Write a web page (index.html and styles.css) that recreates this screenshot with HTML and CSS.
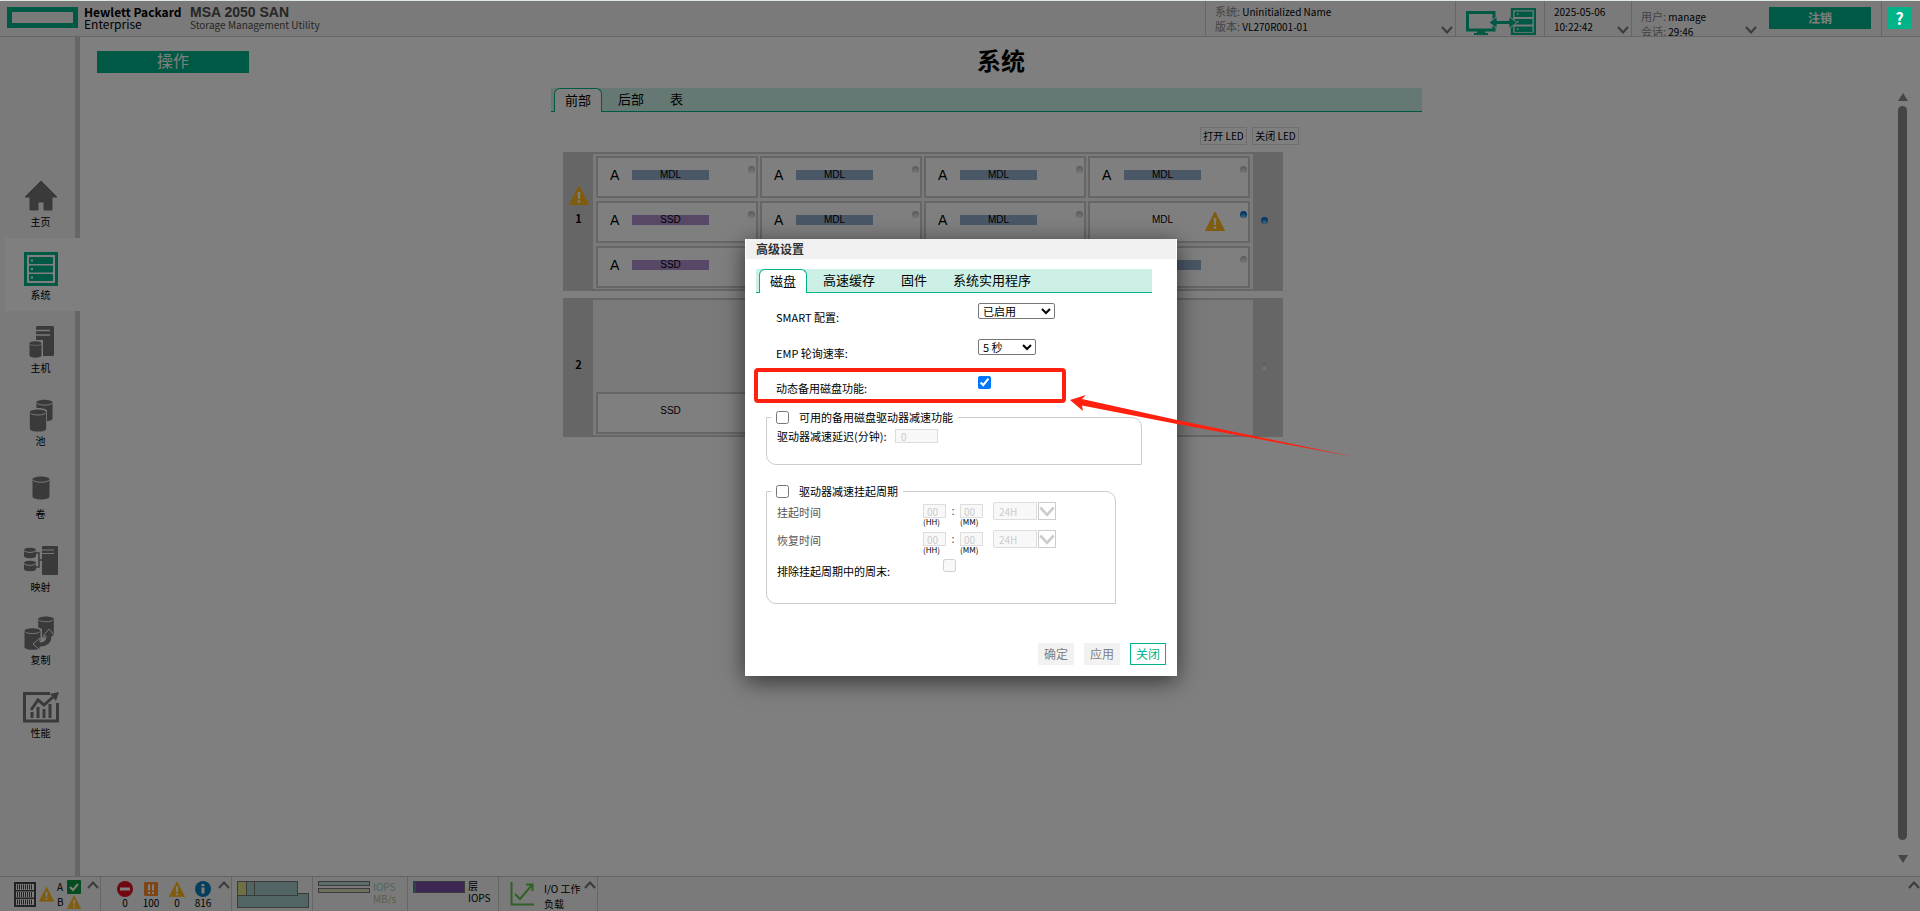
FILE: index.html
```html
<!DOCTYPE html>
<html lang="zh-CN">
<head>
    <meta charset="UTF-8">
    <title>MSA 2050 SAN</title>
    <link rel="stylesheet" href="styles.css">
</head>
<body>
    <svg class="symbols" aria-hidden="true">
        <symbol id="warn" viewBox="0 0 20 20">
            <path d="M10 1 L19.5 19.5 H0.5 Z" fill="#ffb81c" stroke="#ffb81c" stroke-linejoin="round"/>
            <path d="M8.6 7 h2.8 l-.5 7 h-1.8 z M8.8 15.4 h2.4 v2.3 h-2.4 z" fill="#fff"/>
        </symbol>
        <symbol id="down" viewBox="0 0 12 8"><path d="M1 1 L6 6.5 L11 1" fill="none" stroke="currentColor" stroke-width="2"/></symbol>
        <symbol id="up" viewBox="0 0 12 8"><path d="M1 7 L6 1.5 L11 7" fill="none" stroke="currentColor" stroke-width="2"/></symbol>
        <symbol id="cyl" viewBox="0 0 18 24">
            <path d="M0.5 3.5 C0.5 -.5 17.5 -.5 17.5 3.5 V20.5 C17.5 24.5 .5 24.5 .5 20.5 Z" fill="#757575"/>
            <path d="M1 4 C2 7 16 7 17 4" fill="none" stroke="#f4f4f4"/>
        </symbol>
    </svg>

    <div class="app">
        <header class="header">
            <div class="brand">
                <span class="brand-mark"></span>
                <div class="brand-name"><b>Hewlett Packard</b><span>Enterprise</span></div>
                <div class="product"><b>MSA 2050 SAN</b><span>Storage Management Utility</span></div>
            </div>
            <div class="info info-system">
                <div><span>系统:</span> Uninitialized Name</div>
                <div><span>版本:</span> VL270R001-01</div>
                <svg class="chevron"><use href="#down"/></svg>
            </div>
            <div class="info info-link">
                <svg width="70" height="27" viewBox="0 0 70 27">
                    <path d="M1.5 4.5 H28 V22 H1.5 Z" fill="none" stroke="#00b388" stroke-width="3"/>
                    <path d="M11 23 h8 v2 h3 v2 h-14 v-2 h3z" fill="#00b388"/>
                    <path d="M46 1 H69 V26 H46 Z" fill="none" stroke="#00b388" stroke-width="2.4"/>
                    <path d="M48.500 3.500 h18 v5.500 h-18z M48.500 11 h18 v5.500 h-18z M48.500 18.500 h18 v5.500 h-18z" fill="#00b388"/>
                    <path d="M51 6 h1.500 M51 13.700 h1.500 M51 21 h1.500" stroke="#f4f4f4" stroke-width="1.500"/>
                    <path d="M23 14.500 L31 8.500 V12.500 H43 V8.500 L51 14.500 L43 20.500 V16.500 H31 V20.500 Z" fill="#00b388" stroke="#f4f4f4"/>
                </svg>
            </div>
            <div class="info info-date">
                <div>2025-05-06</div>
                <div>10:22:42</div>
                <svg class="chevron"><use href="#down"/></svg>
            </div>
            <div class="info info-user">
                <div><span>用户:</span> manage</div>
                <div><span>会话:</span> 29:46</div>
                <svg class="chevron"><use href="#down"/></svg>
            </div>
            <div class="logout"><button type="button">注销</button></div>
            <div class="help"><button type="button">?</button></div>
        </header>

        <div class="body">
            <nav class="sidebar">
                <a href="#">
                    <svg width="34" height="34" viewBox="0 0 34 34"><path d="M17 2 L33 18 H28 V31 H20 V23 H14 V31 H6 V18 H1 Z" fill="#757575" stroke="#757575" stroke-linejoin="round"/></svg>
                    主页
                </a>
                <a href="#" class="active">
                    <svg width="34" height="34" viewBox="0 0 34 34">
                        <path d="M1.500 1.500 H32.500 V32.500 H1.500 Z" fill="none" stroke="#00b388" stroke-width="3"/>
                        <g fill="#00b388"><rect x="5" y="5" width="24" height="7" rx="1"/><rect x="5" y="13.500" width="24" height="7" rx="1"/><rect x="5" y="22" width="24" height="7" rx="1"/></g>
                        <path d="M7 8.500 h2 M7 17 h2 M7 25.500 h2" stroke="#fff" stroke-width="2"/>
                    </svg>
                    系统
                </a>
                <a href="#">
                    <svg width="34" height="34" viewBox="0 0 34 34">
                        <rect x="12" y="1" width="18" height="30" rx="1.500" fill="#757575"/>
                        <path d="M12 5.500 h14 M12 10 h14" stroke="#f4f4f4" stroke-width="1.500"/>
                        <path d="M4 15 h15 v18 h-15z" fill="#f4f4f4"/>
                        <use href="#cyl" x="5" y="16" width="13" height="17"/>
                    </svg>
                    主机
                </a>
                <a href="#">
                    <svg width="34" height="34" viewBox="0 0 34 34">
                        <use href="#cyl" x="12" y="1" width="17" height="23"/>
                        <path d="M5 13 C5 9 23 9 23 13 V33 H5z" fill="#f4f4f4"/>
                        <use href="#cyl" x="5" y="11" width="18" height="23"/>
                    </svg>
                    池
                </a>
                <a href="#">
                    <svg width="34" height="34" viewBox="0 0 34 34"><use href="#cyl" x="8" y="5" width="18" height="24"/></svg>
                    卷
                </a>
                <a href="#">
                    <svg width="34" height="34" viewBox="0 0 34 34">
                        <rect x="18" y="2" width="16" height="29" rx="1" fill="#757575"/>
                        <path d="M18 6 h12 M18 9.500 h12" stroke="#f4f4f4"/>
                        <path d="M12 9 h3 v14 h-3 M15 16 h3" fill="none" stroke="#757575" stroke-width="1.500"/>
                        <g fill="#757575"><path d="M0 6 C0 3 12 3 12 6 V12 C12 15 0 15 0 12Z"/><path d="M0 19 C0 16 12 16 12 19 V25 C12 28 0 28 0 25Z"/></g>
                        <path d="M0 6.500 C2 9 10 9 12 6.500 M0 19.500 C2 22 10 22 12 19.500" fill="none" stroke="#f4f4f4"/>
                    </svg>
                    映射
                </a>
                <a href="#">
                    <svg width="34" height="36" viewBox="0 0 34 36">
                        <use href="#cyl" x="13" y="1" width="18" height="22"/>
                        <path d="M0 15 C0 11 18 11 18 15 V36 H0z" fill="#f4f4f4"/>
                        <use href="#cyl" x="0" y="12" width="17" height="24"/>
                        <path d="M9 29 L16 23 V27 C20 27 22 25 22 21 H19 L25 14 L31 21 H28 C28 28 23 32 16 32 V35 Z" fill="#757575" stroke="#f4f4f4"/>
                    </svg>
                    复制
                </a>
                <a href="#">
                    <svg width="36" height="34" viewBox="0 0 36 34">
                        <path d="M27 3.500 H1.500 V31 H34.500 V13" fill="none" stroke="#757575" stroke-width="3"/>
                        <path d="M8 20 L15 10 L21 15 L30 7" fill="none" stroke="#757575" stroke-width="3"/>
                        <path d="M27 4 L36 2 L33 11z" fill="#757575"/>
                        <path d="M9 22 v6 M15 17 v11 M21 19 v9 M27 14 v14" stroke="#757575" stroke-width="3"/>
                    </svg>
                    性能
                </a>
            </nav>

            <main class="main">
                <button type="button" class="action">操作</button>
                <h1>系统</h1>
                <div class="content">
                    <div class="tabs">
                        <button type="button" class="tab active">前部</button>
                        <button type="button" class="tab">后部</button>
                        <button type="button" class="tab">表</button>
                    </div>
                    <div class="led-buttons">
                        <button type="button">打开 LED</button>
                        <button type="button">关闭 LED</button>
                    </div>
                    <section class="enclosure">
                        <div class="rail">
                            <div class="rail-state"><svg width="20" height="20"><use href="#warn"/></svg></div>
                            <b>1</b>
                        </div>
                        <div class="disks">
                            <div class="disk"><span class="group">A</span><span class="type mdl">MDL</span><i class="led"></i></div>
                            <div class="disk"><span class="group">A</span><span class="type mdl">MDL</span><i class="led"></i></div>
                            <div class="disk"><span class="group">A</span><span class="type mdl">MDL</span><i class="led"></i></div>
                            <div class="disk"><span class="group">A</span><span class="type mdl">MDL</span><i class="led"></i></div>
                            <div class="disk"><span class="group">A</span><span class="type ssd">SSD</span><i class="led"></i></div>
                            <div class="disk"><span class="group">A</span><span class="type mdl">MDL</span><i class="led"></i></div>
                            <div class="disk"><span class="group">A</span><span class="type mdl">MDL</span><i class="led"></i></div>
                            <div class="disk"><span class="group"></span><span class="type">MDL</span><svg class="disk-warn" width="20" height="20"><use href="#warn"/></svg><i class="led on"></i></div>
                            <div class="disk"><span class="group">A</span><span class="type ssd">SSD</span><i class="led"></i></div>
                            <div class="disk"><span class="group">A</span><span class="type mdl">MDL</span><i class="led"></i></div>
                            <div class="disk"><span class="group">A</span><span class="type mdl">MDL</span><i class="led"></i></div>
                            <div class="disk"><span class="group">A</span><span class="type mdl">MDL</span><i class="led"></i></div>
                        </div>
                        <div class="rail rail-right"><i class="led on"></i></div>
                    </section>
                    <section class="enclosure">
                        <div class="rail">
                            <div class="rail-state"></div>
                            <b>2</b>
                        </div>
                        <div class="disks disks-bottom">
                            <div class="disk"><span class="group"></span><span class="type">SSD</span></div>
                        </div>
                        <div class="rail rail-right"><i class="led"></i></div>
                    </section>
                </div>
                <div class="scrollbar">
                    <svg width="10" height="8"><path d="M5 0 L10 8 H0z" fill="#8a8a8a"/></svg>
                    <span></span>
                    <svg width="10" height="8"><path d="M5 8 L10 0 H0z" fill="#8a8a8a"/></svg>
                </div>
            </main>
        </div>

        <footer class="footer">
            <div class="cell cell-health">
                <svg width="22" height="25" viewBox="0 0 22 25">
                    <rect x="1" y="1" width="20" height="23" fill="#fff" stroke="#444" stroke-width="2"/>
                    <path d="M3 5 h16 M3 12.500 h16 M3 20 h16" stroke="#5c3044" stroke-width="5" stroke-dasharray="1 1"/>
                    <path d="M2 8.700 h18 M2 16.200 h18" stroke="#444" stroke-width="1.500"/>
                </svg>
                <svg width="15" height="16"><use href="#warn"/></svg>
                <div class="ctrl">
                    <span>A</span>
                    <svg width="14" height="14" viewBox="0 0 14 14"><rect width="14" height="14" rx="1" fill="#0a9a3c"/><path d="M3 7 L6 10 L11 4" fill="none" stroke="#fff" stroke-width="2"/></svg>
                    <span>B</span>
                    <svg width="14" height="14"><use href="#warn"/></svg>
                </div>
                <svg class="chevron"><use href="#up"/></svg>
            </div>
            <div class="cell cell-events">
                <div><svg width="16" height="16"><circle cx="8" cy="8" r="8" fill="#e01020"/><path d="M3 8 h10" stroke="#fff" stroke-width="3"/></svg>0</div>
                <div><svg width="16" height="16"><rect x="1" y="1" width="14" height="14" rx="1" fill="#ff8d2a"/><path d="M6 3.500 v6 M10 3.500 v6 M6 11 v2 M10 11 v2" stroke="#fff" stroke-width="2"/></svg>100</div>
                <div><svg width="16" height="16"><use href="#warn"/></svg>0</div>
                <div><svg width="16" height="16"><circle cx="8" cy="8" r="8" fill="#0a7fbd"/><path d="M8 3 v2.200 M8 6.500 v6" stroke="#fff" stroke-width="3"/></svg>816</div>
                <svg class="chevron"><use href="#up"/></svg>
            </div>
            <div class="cell cell-capacity">
                <svg width="72" height="27" viewBox="0 0 72 27">
                    <rect x=".5" y="12.500" width="71" height="14" fill="#a3ccc8" stroke="#777"/>
                    <rect x=".5" y=".5" width="60" height="14" fill="#a3ccc8" stroke="#777"/>
                    <rect x="1" y="1" width="8" height="13" fill="#e0e08a"/>
                    <path d="M9.500 1 v13 M17.500 1 v13" stroke="#777"/>
                </svg>
            </div>
            <div class="cell cell-iops">
                <svg width="52" height="12" viewBox="0 0 52 12">
                    <rect x=".5" y=".5" width="51" height="4" fill="#b8dcd8" stroke="#777"/>
                    <rect x=".5" y="7.500" width="51" height="4" fill="#dde0c0" stroke="#777"/>
                </svg>
                <div><span class="teal">IOPS</span><span class="olive">MB/s</span></div>
            </div>
            <div class="cell cell-tier">
                <svg width="52" height="12" viewBox="0 0 52 12"><rect x=".5" y=".5" width="51" height="11" fill="#7b4ea8" stroke="#777"/><path d="M2 1 v10" stroke="#5588a0" stroke-width="2"/></svg>
                <div><span>层</span><span>IOPS</span></div>
            </div>
            <div class="cell cell-load">
                <svg width="25" height="25" viewBox="0 0 25 25">
                    <path d="M1.500 1 V23.500 H24" fill="none" stroke="#5fc24a" stroke-width="2"/>
                    <path d="M5 13 L10 18 L22 4 M16 3.500 H22.500 V10" fill="none" stroke="#5fc24a" stroke-width="2"/>
                </svg>
                <div><span>I/O 工作</span><span>负载</span></div>
                <svg class="chevron"><use href="#up"/></svg>
            </div>
            <svg class="chevron footer-toggle"><use href="#up"/></svg>
        </footer>
    </div>

    <div class="overlay">
        <div class="dialog" role="dialog" aria-labelledby="dialogTitle">
            <h2 id="dialogTitle">高级设置</h2>
            <form class="dialog-body">
                <div class="tabs">
                    <button type="button" class="tab active">磁盘</button>
                    <button type="button" class="tab">高速缓存</button>
                    <button type="button" class="tab">固件</button>
                    <button type="button" class="tab">系统实用程序</button>
                </div>
                <div class="settings">
                    <div class="row">
                        <label for="smart">SMART 配置:</label>
                        <select id="smart" class="select-wide"><option>已启用</option></select>
                    </div>
                    <div class="row">
                        <label for="emp">EMP 轮询速率:</label>
                        <select id="emp" class="select-narrow"><option>5 秒</option></select>
                    </div>
                    <div class="row row-check">
                        <label for="spare">动态备用磁盘功能:</label>
                        <input type="checkbox" id="spare" checked>
                    </div>
                </div>
                <fieldset class="spindown">
                    <legend><input type="checkbox" id="spindown"><label for="spindown">可用的备用磁盘驱动器减速功能</label></legend>
                    <div class="delay">
                        <label for="delay">驱动器减速延迟(分钟):</label>
                        <input type="text" id="delay" value="0" disabled>
                    </div>
                </fieldset>
                <fieldset class="suspend">
                    <legend><input type="checkbox" id="suspend"><label for="suspend">驱动器减速挂起周期</label></legend>
                    <div class="time">
                        <label for="suspendHour">挂起时间</label>
                        <div class="unit"><input type="text" id="suspendHour" value="00" disabled><small>(HH)</small></div>
                        <span class="colon">:</span>
                        <div class="unit"><input type="text" aria-label="MM" value="00" disabled><small>(MM)</small></div>
                        <select aria-label="24H" disabled><option>24H</option></select>
                        <span class="drop"><svg><use href="#down"/></svg></span>
                    </div>
                    <div class="time">
                        <label for="resumeHour">恢复时间</label>
                        <div class="unit"><input type="text" id="resumeHour" value="00" disabled><small>(HH)</small></div>
                        <span class="colon">:</span>
                        <div class="unit"><input type="text" aria-label="MM" value="00" disabled><small>(MM)</small></div>
                        <select aria-label="24H" disabled><option>24H</option></select>
                        <span class="drop"><svg><use href="#down"/></svg></span>
                    </div>
                    <div class="weekend">
                        <label for="weekend">排除挂起周期中的周末:</label>
                        <input type="checkbox" id="weekend" disabled>
                    </div>
                </fieldset>
                <div class="actions">
                    <button type="button" disabled>确定</button>
                    <button type="button" disabled>应用</button>
                    <button type="button" class="close">关闭</button>
                </div>
            </form>
            <div class="mark"></div>
            <svg class="arrow" width="286" height="64" viewBox="0 0 286 64">
                <path d="M0 7 L16 2 L12 6 L107 27 L285 64 L107 31 L12 12.500 L13 18 Z" fill="#ff2010"/>
            </svg>
        </div>
    </div>
</body>
</html>
```
FILE: styles.css
```css
* {
    box-sizing: border-box;
}
body {
    margin: 0;
    height: 100vh;
    overflow: hidden;
    background: #fff;
    color: #000;
    font-family: "Noto Sans CJK SC", sans-serif;
    font-size: 11px;
    line-height: 16px;
}
button, input, select {
    font-family: inherit;
    margin: 0;
}
button {
    padding: 0;
    border: none;
}
a {
    color: inherit;
    text-decoration: none;
}
svg {
    display: block;
    flex: none;
}
.symbols {
    position: absolute;
    width: 0;
    height: 0;
}
.app {
    height: 100vh;
    display: flex;
    flex-direction: column;
    border-top: 1px solid #e0e8e6;
}
.chevron {
    width: 12px;
    height: 8px;
    color: #777;
}

/* header */
.header {
    height: 36px;
    flex: none;
    display: flex;
    background: #f4f4f4;
    border-bottom: 1px solid #ccc;
    overflow: hidden;
}
.brand {
    flex: 1;
    display: flex;
    padding: 5px 0 0 7px;
}
.brand-mark {
    width: 71px;
    height: 21px;
    margin-top: 1px;
    border: 5px solid #00b388;
}
.brand-name, .product {
    display: flex;
    flex-direction: column;
    line-height: 12px;
}
.brand-name {
    width: 112px;
    padding-left: 6px;
    font-size: 12px;
}
.product {
    color: #4d4d4d;
    font-size: 10px;
}
.product b {
    font-family: "Liberation Sans", sans-serif;
    font-size: 14px;
    line-height: 13px;
}
.info {
    position: relative;
    padding: 3px 0 0 9px;
    border-left: 1px solid #ccc;
    font-size: 10px;
    line-height: 15px;
    white-space: nowrap;
}
.info span {
    color: #888;
    font-size: 11px;
}
.info .chevron {
    position: absolute;
    right: 2px;
    top: 25px;
}
.info-system {
    width: 250px;
}
.info-link {
    width: 89px;
    padding: 7px 0 0 10px;
}
.info-date {
    width: 87px;
}
.info-user {
    width: 128px;
    padding-top: 8px;
}
.logout {
    width: 122px;
    padding: 6px 0 0 10px;
}
.logout button {
    width: 102px;
    height: 22px;
    background: #00b388;
    color: #fff;
    font-size: 12px;
    font-weight: bold;
    line-height: 20px;
}
.help {
    width: 39px;
    padding: 6px 0 0 6px;
    border-left: 1px solid #ccc;
}
.help button {
    position: relative;
    z-index: 3;
    width: 23px;
    height: 22px;
    background: #00b388;
    color: #fff;
    font-size: 16px;
    font-weight: bold;
    line-height: 20px;
}

/* sidebar */
.body {
    flex: 1;
    min-height: 0;
    display: flex;
}
.sidebar {
    width: 80px;
    flex: none;
    padding: 128px 0 0 5px;
    background: linear-gradient(to right, #f4f4f4 75px, #ccc 75px);
}
.sidebar a {
    height: 73px;
    display: flex;
    flex-direction: column;
    align-items: center;
    justify-content: flex-end;
    gap: 1px;
    padding: 0 4px 8px 0;
    font-size: 10px;
}
.sidebar a.active {
    background: #fff;
}

/* main */
.main {
    flex: 1;
    min-width: 0;
    display: grid;
    grid-template-columns: 1fr 27px;
    grid-template-rows: 51px 1fr;
}
.action {
    grid-area: 1 / 1;
    width: 152px;
    height: 22px;
    margin: 14px 0 0 17px;
    padding-bottom: 3px;
    background: #00b388;
    color: #fff;
    font-size: 16px;
    line-height: 19px;
}
h1 {
    grid-area: 1 / 1 / 2 / 3;
    justify-self: center;
    margin: 7px 0 0 2px;
    font-size: 24px;
    line-height: 32px;
}
.content {
    width: 871px;
    justify-self: center;
}
.tabs {
    height: 24px;
    display: flex;
    padding-left: 3px;
    background: #ccf0e6;
    border-bottom: 1px solid #00b388;
}
.tab {
    height: 22px;
    padding: 0 13px;
    background: none;
    color: #000;
    font-size: 13px;
    line-height: 20px;
}
.tab.active {
    height: 24px;
    margin-right: 3px;
    padding: 0 10px 1px;
    background: #fff;
    border: 1px solid #00b388;
    border-bottom: none;
    border-radius: 6px 6px 0 0;
}
.led-buttons {
    display: flex;
    justify-content: flex-end;
    gap: 5px;
    padding: 15px 123px 7px 0;
}
.led-buttons button {
    width: 47px;
    height: 18px;
    background: #fff;
    border: 1px solid #ddd;
    color: #000;
    font-size: 10px;
    line-height: 16px;
    white-space: nowrap;
}
.enclosure {
    width: 720px;
    height: 139px;
    display: flex;
    margin: 0 0 7px 12px;
    background: #ccc;
}
.rail {
    width: 30px;
    padding-left: 1px;
    text-align: center;
}
.rail-state {
    height: 53px;
    display: flex;
    justify-content: center;
    align-items: flex-end;
}
.rail b {
    font-size: 11px;
    line-height: 26px;
}
.rail-right {
    padding: 65px 0 0 8px;
}
.disks {
    flex: 1;
    display: grid;
    grid-template-columns: repeat(4, 1fr);
    grid-auto-rows: 42px;
    gap: 3px 2px;
    margin: 2px 0;
    padding: 2px 3px 1px;
    background: #f4f4f4;
}
.disks-bottom {
    align-content: end;
}
.disk {
    position: relative;
    display: flex;
    align-items: center;
    padding: 0 0 4px 12px;
    border: 2px solid #ccc;
    background: #fff;
    font-family: "Liberation Sans", sans-serif;
}
.group {
    width: 22px;
    font-size: 14px;
}
.type {
    width: 77px;
    height: 10px;
    font-size: 10px;
    line-height: 10px;
    text-align: center;
}
.mdl {
    background: #94aece;
}
.ssd {
    background: #b090ce;
}
.led {
    display: block;
    width: 7px;
    height: 7px;
    border-radius: 4px;
    background: radial-gradient(circle at 50% 80%, #eee, #aaa);
}
.led.on {
    background: radial-gradient(circle at 50% 80%, #8cf, #0a6fc8 60%);
}
.disk .led {
    position: absolute;
    right: 1px;
    top: 8px;
}
.disk-warn {
    margin: 2px 0 0 4px;
}
.scrollbar {
    display: flex;
    flex-direction: column;
    align-items: center;
    gap: 5px;
    padding: 5px 8px 13px 0;
}
.scrollbar span {
    flex: 1;
    width: 9px;
    margin-bottom: 10px;
    border-radius: 5px;
    background: #8a8a8a;
}

/* footer */
.footer {
    height: 35px;
    flex: none;
    display: flex;
    background: #f4f4f4;
    border-top: 1px solid #ccc;
    overflow: hidden;
}
.cell {
    display: flex;
    align-items: flex-start;
    padding-top: 4px;
    border-right: 1px solid #ccc;
    font-size: 10px;
    line-height: 12px;
    white-space: nowrap;
}
.cell span {
    display: block;
}
.cell .chevron {
    margin: 0 1px 0 auto;
}
.cell-health {
    width: 101px;
    align-items: center;
    gap: 3px;
    padding: 0 0 0 14px;
}
.cell-health .chevron {
    align-self: flex-start;
    margin-top: 4px;
}
.ctrl {
    display: grid;
    grid-template-columns: 8px 14px;
    gap: 1px 2px;
    line-height: 14px;
}
.cell-events {
    width: 131px;
    padding-left: 11px;
}
.cell-events div {
    width: 26px;
    display: flex;
    flex-direction: column;
    align-items: center;
}
.cell-capacity {
    width: 81px;
    padding-left: 5px;
}
.cell-iops {
    width: 95px;
    gap: 3px;
    padding-left: 5px;
}
.cell-tier {
    width: 91px;
    gap: 3px;
    padding: 3px 0 0 5px;
}
.cell-tier svg {
    margin-top: 1px;
}
.cell-load {
    width: 99px;
    padding-left: 11px;
    line-height: 15px;
}
.cell-load div {
    margin-left: 9px;
}
.teal {
    color: #9accc6;
}
.olive {
    color: #b8bc90;
}
.footer-toggle {
    margin: 4px 0 0 auto;
}

/* dialog */
.overlay {
    position: absolute;
    inset: 1px 0 0;
    z-index: 2;
    display: flex;
    justify-content: center;
    align-items: center;
    padding: 3px 0 0 2px;
    background: rgba(0, 0, 0, 0.5);
}
.dialog {
    position: relative;
    width: 432px;
    border: 1px solid #fff;
    border-top: none;
    background: #fff;
    box-shadow: 0 5px 22px rgba(0, 0, 0, 0.6);
}
.dialog h2 {
    margin: 0 0 10px;
    padding-left: 10px;
    background: #f0f0f0;
    color: #333;
    font-size: 12px;
    line-height: 20px;
}
.dialog-body {
    padding: 0 10px;
}
.dialog .tabs {
    width: 396px;
}
.settings {
    padding: 10px 0 0 20px;
}
.row {
    height: 36px;
    display: flex;
    align-items: flex-start;
}
.row-check {
    height: 34px;
}
.row label {
    width: 202px;
    padding-top: 6px;
}
.row-check label {
    padding-top: 5px;
}
.row-check input {
    margin-top: 1px;
}
.row select {
    height: 16px;
    padding: 0 4px;
    appearance: none;
    border: 1px solid #767676;
    border-radius: 2px;
    background: #fff url("data:image/svg+xml,%3Csvg xmlns='http://www.w3.org/2000/svg' width='10' height='7'%3E%3Cpath d='M1 1 L5 5 L9 1' fill='none' stroke='black' stroke-width='2'/%3E%3C/svg%3E") no-repeat right 3px center;
    color: #000;
    font-size: 11px;
    line-height: 12px;
}
.select-wide {
    width: 77px;
}
.select-narrow {
    width: 58px;
}
input[type=checkbox] {
    width: 13px;
    height: 13px;
    flex: none;
}
fieldset {
    margin: 0 0 0 10px;
    padding: 0 4px;
    border: 1px solid #ccc;
    border-radius: 0 10px;
}
legend {
    display: flex;
    align-items: center;
    gap: 10px;
    padding: 0 5px;
}
.spindown {
    width: 376px;
    padding-bottom: 17px;
}
.suspend {
    width: 350px;
    margin-top: 18px;
    padding-bottom: 24px;
}
.delay {
    height: 22px;
    display: flex;
    align-items: center;
    padding-left: 6px;
}
.delay label {
    width: 118px;
}
input[type=text] {
    height: 14px;
    padding: 0 5px;
    border: 1px solid #ddd;
    background: #f8f8f8;
    color: #ccc;
    font-size: 10px;
    line-height: 12px;
}
.delay input {
    width: 43px;
}
.time {
    height: 28px;
    display: flex;
    align-items: flex-start;
    padding: 3px 0 0 6px;
    color: #555;
}
.time label {
    width: 146px;
    padding-top: 2px;
}
.unit {
    width: 23px;
    padding-top: 2px;
}
.unit input {
    display: block;
    width: 23px;
    padding: 0 3px;
}
.unit small {
    display: block;
    color: #000;
    font-size: 8px;
    line-height: 8px;
}
.colon {
    width: 14px;
    text-align: center;
}
.time select {
    width: 44px;
    height: 18px;
    margin: 0 1px 0 10px;
    padding: 0 5px;
    appearance: none;
    border: 1px solid #ddd;
    border-radius: 2px 0 0 2px;
    background: #f8f8f8;
    color: #ccc;
    font-size: 10px;
    opacity: 1;
}
.drop {
    width: 18px;
    height: 18px;
    display: flex;
    justify-content: center;
    align-items: center;
    border: 1px solid #ccc;
    color: #ccc;
}
.drop svg {
    width: 16px;
    height: 11px;
}
.weekend {
    display: flex;
    align-items: flex-start;
    padding: 4px 0 0 6px;
}
.weekend label {
    width: 166px;
    padding-top: 4px;
}
.actions {
    display: flex;
    justify-content: flex-end;
    gap: 10px;
    padding: 39px 0 10px;
}
.actions button {
    width: 36px;
    height: 22px;
    padding-bottom: 2px;
    background: #f2f2f2;
    color: #808080;
    font-size: 12px;
}
.actions .close {
    background: #fff;
    border: 1px solid #00b388;
    color: #00b388;
}
.mark {
    position: absolute;
    left: 8px;
    top: 129px;
    width: 312px;
    height: 35px;
    border: 4px solid #ff2010;
    border-radius: 4px;
    pointer-events: none;
}
.arrow {
    position: absolute;
    left: 324px;
    top: 154px;
    pointer-events: none;
}
```
